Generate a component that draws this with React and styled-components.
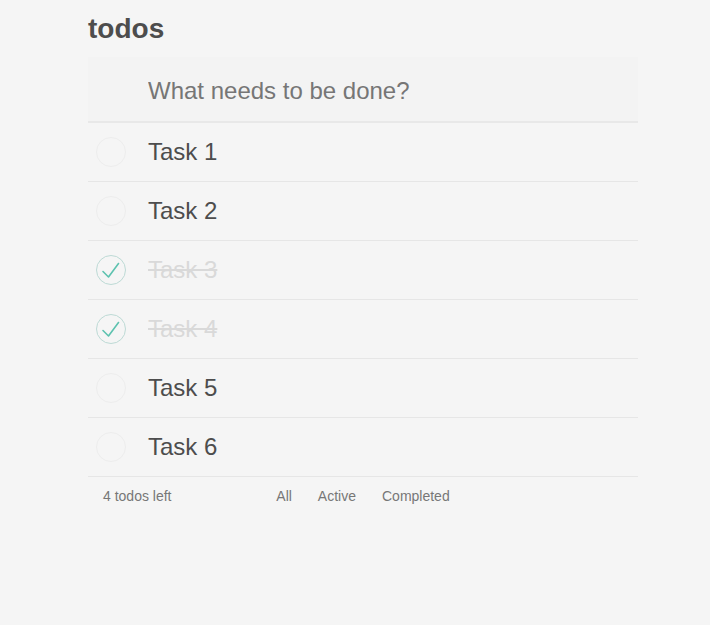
import styled, { createGlobalStyle } from "styled-components";

const GlobalStyle = createGlobalStyle`
  body {
    margin: 0;
    background: #f5f5f5;
    font-family: "Liberation Sans", Arial, sans-serif;
    color: #4d4d4d;
  }
`;

const todos = [
  { id: 1, title: "Task 1", done: false },
  { id: 2, title: "Task 2", done: false },
  { id: 3, title: "Task 3", done: true },
  { id: 4, title: "Task 4", done: true },
  { id: 5, title: "Task 5", done: false },
  { id: 6, title: "Task 6", done: false },
];

const Check = () => (
  <svg width="30" height="30" viewBox="0 0 30 30">
    <path
      d="M7 16.5 L12.5 22 L22.5 8.5"
      fill="none"
      stroke="#5dc2af"
      strokeWidth="1.6"
      strokeLinecap="round"
      strokeLinejoin="round"
    />
  </svg>
);

const App = () => {
  const left = todos.filter((t) => !t.done).length;
  return (
    <>
      <GlobalStyle />
      <Page>
        <Title>todos</Title>
        <NewTodo placeholder="What needs to be done?" />
        <List>
          {todos.map((t) => (
            <Row key={t.id}>
              <Toggle $done={t.done}>{t.done && <Check />}</Toggle>
              <Label $done={t.done}>{t.title}</Label>
            </Row>
          ))}
        </List>
        <Footer>
          <Count>{left} todos left</Count>
          <Filters>
            <Filter>All</Filter>
            <Filter>Active</Filter>
            <Filter>Completed</Filter>
          </Filters>
        </Footer>
      </Page>
    </>
  );
};

const Page = styled.div`
  width: 550px;
  margin-left: 88px;
`;

const Title = styled.h1`
  margin: 0;
  height: 57px;
  line-height: 57px;
  font-size: 28px;
  font-weight: bold;
  color: #4d4d4d;
`;

const NewTodo = styled.input`
  display: block;
  box-sizing: border-box;
  width: 100%;
  height: 66px;
  padding: 3px 0 0 60px;
  border: none;
  border-bottom: 2px solid #e8e8e8;
  background: #f3f3f3;
  font-family: inherit;
  font-size: 24px;
  color: #4d4d4d;
  outline: none;

  &::placeholder {
    color: #767676;
  }
`;

const List = styled.ul`
  list-style: none;
  margin: 0;
  padding: 0;
`;

const Row = styled.li`
  display: flex;
  align-items: center;
  gap: 22px;
  height: 58px;
  padding-left: 8px;
  border-bottom: 1px solid #e6e6e6;
`;

const Toggle = styled.span`
  display: flex;
  box-sizing: border-box;
  width: 30px;
  height: 30px;
  border-radius: 50%;
  border: 1px solid ${(p) => (p.$done ? "#bddad5" : "#ededed")};
  align-items: center;
  justify-content: center;

  svg {
    margin: -1px;
  }
`;

const Label = styled.span`
  font-size: 24px;
  color: ${(p) => (p.$done ? "#d9d9d9" : "#4d4d4d")};
  text-decoration: ${(p) => (p.$done ? "line-through" : "none")};
`;

const Footer = styled.footer`
  display: grid;
  grid-template-columns: 1fr auto 1fr;
  align-items: center;
  height: 38px;
  padding: 0 15px;
  font-size: 14px;
  color: #777;
`;

const Count = styled.span``;

const Filters = styled.div`
  display: flex;
  gap: 26px;
`;

const Filter = styled.span`
  color: #777;
`;

export default App;
